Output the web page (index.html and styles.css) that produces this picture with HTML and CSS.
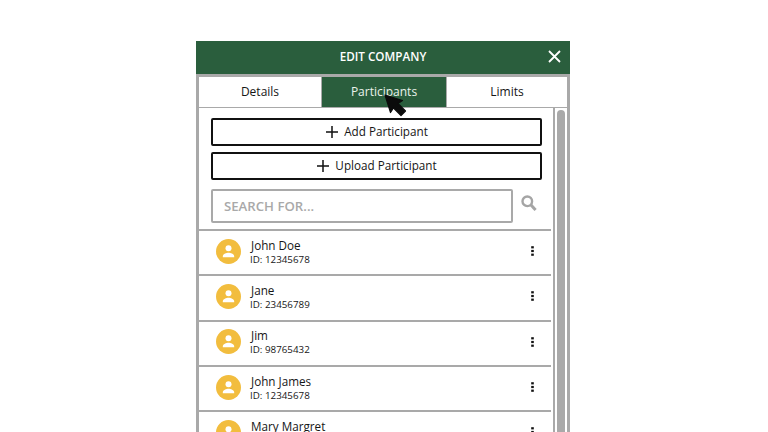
FILE: index.html
```html
<!DOCTYPE html>
<html lang="en">
<head>
<meta charset="utf-8">
<title>Edit Company</title>
<link rel="stylesheet" href="styles.css">
</head>
<body>
<svg width="0" height="0" class="defs">
  <symbol id="person" viewBox="0 0 25 25">
    <circle cx="12.500" cy="12.500" r="12.500" fill="#f2bd3e"/>
    <circle cx="12.500" cy="9.300" r="3" fill="#fff"/>
    <path d="M6.800 17.400c0-2.500 3.600-3.700 5.700-3.700s5.700 1.200 5.700 3.700v.9H6.800z" fill="#fff"/>
  </symbol>
  <symbol id="dots" viewBox="0 0 3 10">
    <rect x="0.200" y="0.200" width="2.600" height="2.200" fill="#111"/>
    <rect x="0.200" y="3.900" width="2.600" height="2.200" fill="#111"/>
    <rect x="0.200" y="7.600" width="2.600" height="2.200" fill="#111"/>
  </symbol>
  <symbol id="plus" viewBox="0 0 12 12">
    <path d="M6 0v12M0 6h12" stroke="#111" stroke-width="1.500" fill="none"/>
  </symbol>
</svg>
<main class="panel">
  <header class="title">
    <h1>EDIT COMPANY</h1>
    <svg class="close" viewBox="0 0 13 13"><path d="M1 1l11 11M12 1L1 12" stroke="#fff" stroke-width="1.800" fill="none"/></svg>
  </header>
  <nav class="tabs">
    <div class="tab tab-details">Details</div>
    <div class="tab tab-active">Participants</div>
    <div class="tab tab-limits">Limits</div>
  </nav>
  <section class="body">
    <div class="content">
      <div class="actions">
        <button class="btn"><svg class="plus"><use href="#plus"/></svg>Add Participant</button>
        <button class="btn"><svg class="plus"><use href="#plus"/></svg>Upload Participant</button>
      </div>
      <div class="search">
        <div class="search-box">SEARCH FOR...</div>
        <svg class="search-icon" viewBox="0 0 16 17"><circle cx="6.300" cy="6.300" r="4.800" stroke="#a5a5a5" stroke-width="2.400" fill="none"/><path d="M10 10l4.600 5" stroke="#a5a5a5" stroke-width="3" fill="none"/></svg>
      </div>
      <ul class="list">
        <li class="row"><svg class="avatar"><use href="#person"/></svg><div class="who"><div class="name">John Doe</div><div class="id">ID: 12345678</div></div><svg class="dots"><use href="#dots"/></svg></li>
        <li class="row"><svg class="avatar"><use href="#person"/></svg><div class="who"><div class="name">Jane</div><div class="id">ID: 23456789</div></div><svg class="dots"><use href="#dots"/></svg></li>
        <li class="row"><svg class="avatar"><use href="#person"/></svg><div class="who"><div class="name">Jim</div><div class="id">ID: 98765432</div></div><svg class="dots"><use href="#dots"/></svg></li>
        <li class="row"><svg class="avatar"><use href="#person"/></svg><div class="who"><div class="name">John James</div><div class="id">ID: 12345678</div></div><svg class="dots"><use href="#dots"/></svg></li>
        <li class="row row-last"><svg class="avatar"><use href="#person"/></svg><div class="who"><div class="name">Mary Margret</div></div><svg class="dots"><use href="#dots"/></svg></li>
      </ul>
    </div>
    <div class="scroll"><div class="thumb"></div></div>
  </section>
</main>
<svg class="cursor" viewBox="0 0 24 24"><path d="M1 1l17.500 5.500-4.500 3L21.500 17l-4.500 4.500-7.500-7.500-3 4.500z" fill="#0b0b0b" stroke="#0b0b0b" stroke-width="1.200" stroke-linejoin="round"/></svg>
</body>
</html>
```

FILE: styles.css
```css
* { box-sizing: border-box; }
html, body { margin: 0; height: 432px; overflow: hidden; background: #fff; }
body { font-family: "Open Sans", "Noto Sans", sans-serif; color: #161616; position: relative; }
.defs { position: absolute; }
.panel { width: 374px; margin: 41px 0 0 196px; background: #a9a9a9; height: 391px; overflow: hidden; }
.title { height: 33px; background: #2a5e3d; display: flex; align-items: center; justify-content: center; position: relative; padding-bottom: 3px; }
.title h1 { margin: 0; font-size: 11.700px; font-weight: 600; color: #fff; }
.close { position: absolute; right: 9px; top: 9px; width: 13px; height: 13px; }
.tabs { display: flex; gap: 1px; padding: 3px 3px 1px; }
.tab { height: 30px; background: #fff; display: flex; align-items: center; justify-content: center; font-size: 12px; padding-bottom: 1px; }
.tab-details { width: 122px; }
.tab-active { width: 124px; background: #2a5e3d; color: #eaf3ec; }
.tab-limits { flex: 1; }
.body { margin: 0 3px; background: #fff; display: flex; height: 400px; }
.content { width: 356px; position: relative; }
.content::after { content: ""; position: absolute; top: 0; bottom: 0; right: 0; width: 2px; background: #a9a9a9; }
.actions { padding: 10px 10px 0 12px; display: flex; flex-direction: column; gap: 6px; }
.btn { height: 28px; width: 331px; background: #fff; border: 2px solid #111; border-radius: 2px; font: 11.700px "Open Sans", sans-serif; color: #161616; display: flex; align-items: center; justify-content: center; gap: 6px; padding: 0 0 2px 1px; }
.plus { width: 12px; height: 12px; margin-top: 2px; }
.search { display: flex; align-items: flex-start; padding: 9px 0 0 12px; gap: 8px; }
.search-box { width: 302px; height: 34px; border: 2px solid #a9a9a9; border-radius: 2px; padding-left: 11px; display: flex; align-items: center; font-size: 13.200px; font-weight: 600; color: #a9a9a9; }
.search-icon { width: 16px; height: 17px; margin-top: 6px; }
.list { list-style: none; margin: 6px 0 0; padding: 0; width: 352px; }
.row { height: 45.300px; border-top: 2px solid #a9a9a9; display: flex; align-items: center; padding: 0 0 3px 17px; }
.avatar { width: 25px; height: 25px; margin-right: 9px; }
.who { width: 281px; padding-top: 2px; }
.name { font-size: 11.700px; line-height: 15px; padding-left: 1px; }
.id { font-size: 9.800px; line-height: 14px; }
.row-last .who { padding-top: 0; margin-top: -12px; }
.dots { width: 3px; height: 10px; }
.scroll { flex: 1; padding: 2px 1px 0 2px; }
.thumb { width: 8px; height: 400px; background: #a9a9a9; border-radius: 4px; }
.cursor { position: absolute; left: 384px; top: 94px; width: 24px; height: 24px; }
```
